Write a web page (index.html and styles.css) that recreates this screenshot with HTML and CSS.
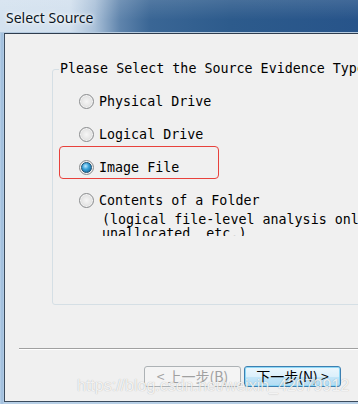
FILE: index.html
```html
<!DOCTYPE html>
<html lang="en">

<head>
  <meta charset="UTF-8">
  <title>Select Source</title>
  <link rel="stylesheet" href="styles.css">
</head>

<body>

  <div class="window">
    <div class="titlebar">
      <span class="title">Select Source</span>
    </div>

    <div class="client">
      <div class="content">
        <fieldset class="group">
          <legend>Please Select the Source Evidence Type</legend>
          <div class="option"><span class="radio"></span>Physical Drive</div>
          <div class="option"><span class="radio"></span>Logical Drive</div>
          <div class="option marked"><span class="radio checked"></span>Image File</div>
          <div class="option"><span class="radio"></span>Contents of a Folder</div>
          <div class="note">(logical file-level analysis only; does not include deleted files,<br>unallocated, etc.)</div>
        </fieldset>
      </div>

      <div class="footer">
        <div class="sep"></div>
        <div class="buttons">
          <button class="btn" disabled>&lt; 上一步(B)</button>
          <button class="btn primary">下一步(N) &gt;</button>
        </div>
      </div>
    </div>
  </div>

  <div class="watermark">https://blog.csdn.net/weixin_42079912</div>

</body>

</html>
```

FILE: styles.css
```css
* {
  margin: 0;
  padding: 0;
  box-sizing: border-box;
}

html,
body {
  width: 358px;
  height: 404px;
  overflow: hidden;
}

body {
  position: relative;
  background: #a9c4df;
}

.window {
  height: 404px;
  display: flex;
  flex-direction: column;
  background: linear-gradient(to right, #b9d1e8, #9dbcdc 2px, #b7cfe6 4px);
  padding-bottom: 2px;
}

/* title bar */
.titlebar {
  height: 33px;
  flex: none;
  padding: 0 0 0 6px;
  display: flex;
  align-items: center;
  background:
    linear-gradient(to bottom, rgba(255, 255, 255, .12), rgba(255, 255, 255, 0) 60%),
    linear-gradient(to right, #d4e2ef 0, #d2e0ee 70px, #a9c0d8 95px, #5f84ac 120px, #3a6695 150px, #2d5b8c 230px, #27548a 100%);
  box-shadow: inset 0 -1px 0 #b6cbe0;
}

.title {
  font-family: "Noto Sans", sans-serif;
  font-size: 14px;
  color: #0c1624;
  margin-top: 1px;
  text-shadow: 0 0 6px #fff, 0 0 3px #fff;
}

/* dialog area */
.client {
  flex: 1;
  margin-left: 4px;
  border-left: 1px solid #3b4b5d;
  border-top: 1px solid #2f3d4e;
  border-bottom: 1px solid #3b4b5d;
  background: #f0f0f0;
  display: flex;
  flex-direction: column;
  overflow: hidden;
}

.content {
  flex: 1;
  padding: 27px 0 0 47px;
  overflow: hidden;
}

.group {
  width: 440px;
  border: 1px solid #d5dfe5;
  border-radius: 3px;
  padding: 8px 0 68px 0;
  font-family: "DejaVu Sans Mono", monospace;
  font-size: 13.33px;
  color: #000;
}

.group legend {
  margin-left: 6px;
  padding: 0 1px;
  line-height: 16px;
}

.option {
  position: relative;
  height: 33px;
  display: flex;
  align-items: center;
  padding-left: 26px;
  white-space: nowrap;
}

.option.marked::before {
  content: "";
  position: absolute;
  left: 6px;
  top: -5px;
  width: 158px;
  height: 31px;
  border: 1px solid #e8413c;
  border-radius: 4px;
}

.radio {
  width: 15px;
  height: 15px;
  margin-right: 5px;
  border-radius: 50%;
  border: 1px solid #8b8d8f;
  background: radial-gradient(circle at 50% 50%, #f6f6f6 0, #e8e8e8 45%, #cfcfcf 100%);
  box-shadow: inset 0 0 0 1px #f4f4f4;
  display: flex;
  align-items: center;
  justify-content: center;
}

.radio.checked::after {
  content: "";
  width: 9px;
  height: 9px;
  border-radius: 50%;
  border: 1px solid #1c4f72;
  background: radial-gradient(circle at 40% 35%, #bfe8ff 0, #3aa3d9 40%, #0e5a8d 100%);
}

.note {
  margin-top: -4px;
  padding-left: 49px;
  height: 23px;
  line-height: 14px;
  white-space: nowrap;
  overflow: hidden;
}

/* bottom buttons */
.footer {
  flex: none;
  height: 53px;
  padding-left: 14px;
}

.sep {
  height: 2px;
  border-top: 1px solid #a0a0a0;
  border-bottom: 1px solid #fff;
}

.buttons {
  display: flex;
  justify-content: flex-end;
  gap: 3px;
  padding: 16px 17px 0 0;
}

.btn {
  width: 97px;
  height: 21px;
  border: 1px solid #adb2b5;
  border-radius: 3px;
  background: #f4f4f4;
  font-family: "Noto Sans CJK SC", sans-serif;
  font-size: 14px;
  line-height: 19px;
  color: #000;
}

.btn:disabled {
  color: #a0a0a0;
}

.btn.primary {
  border-color: #3c7fb1;
  background: linear-gradient(to bottom, #ecf7fd 0, #dcf0fb 50%, #c4e6f8 50%, #b3ddf4 100%);
  box-shadow: inset 0 0 0 1px #8ed8f6;
}

.watermark {
  position: absolute;
  left: 77px;
  top: 377px;
  font-family: "Liberation Sans", sans-serif;
  font-size: 16px;
  line-height: 18px;
  color: rgba(255, 255, 255, .85);
  text-shadow: 0 0 1px rgba(0, 0, 0, .3);
  white-space: nowrap;
}
```
